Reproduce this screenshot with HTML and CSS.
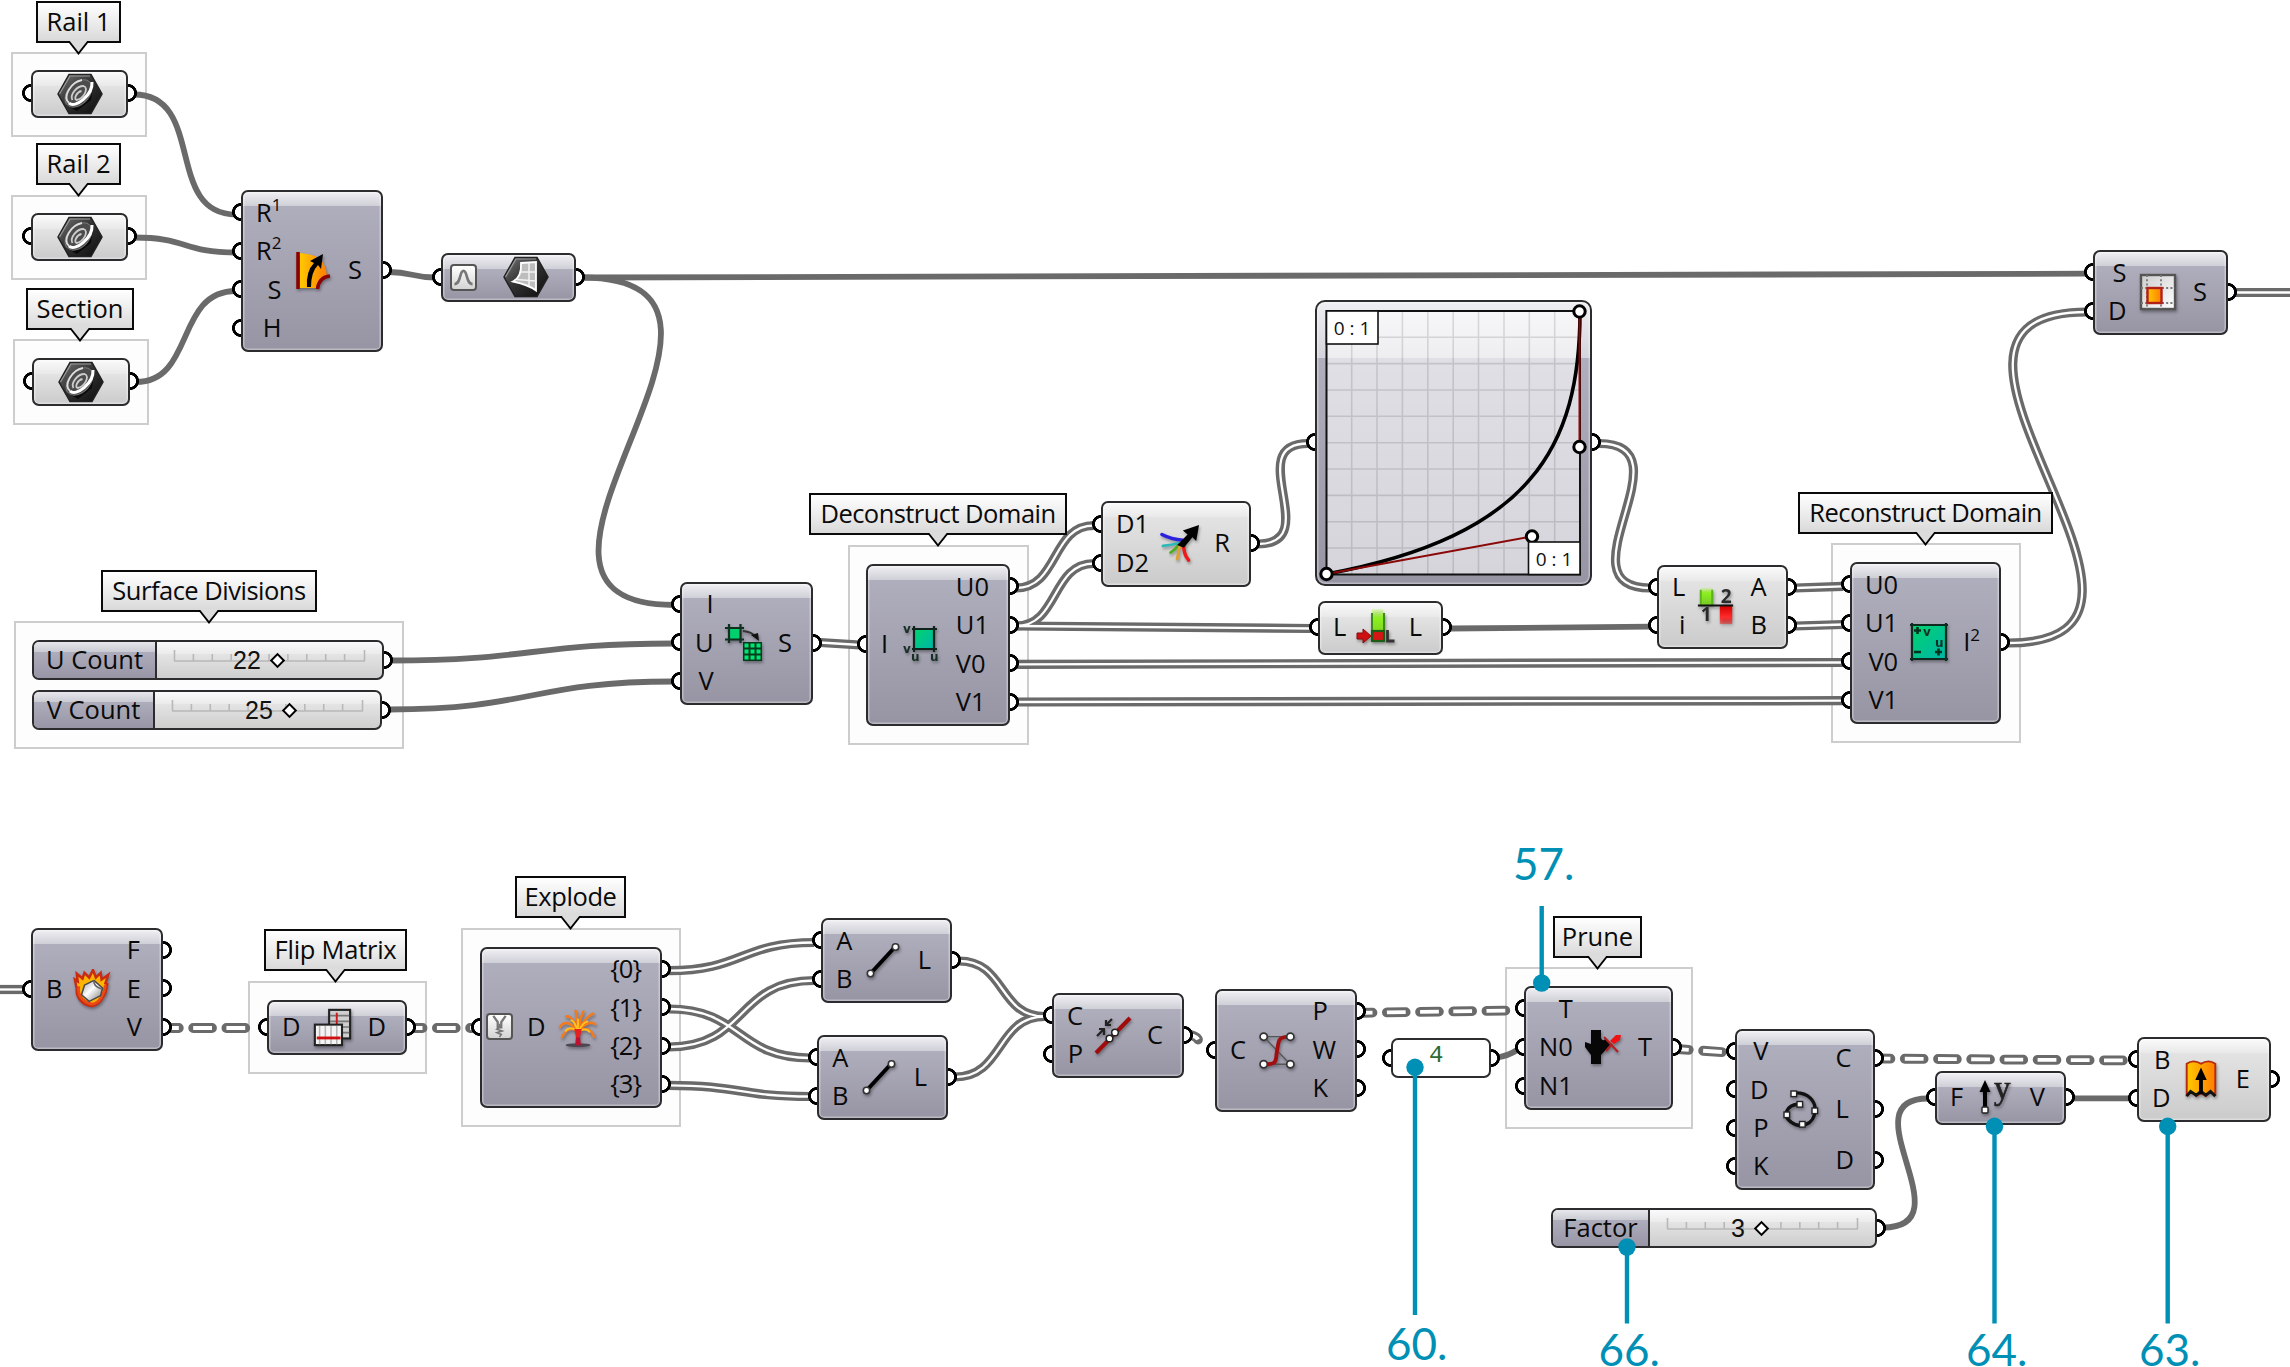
FILE: index.html
```html
<!DOCTYPE html>
<html lang="en">
<head>
<meta charset="utf-8">
<title>Node graph definition</title>
<link rel="stylesheet" href="styles.css">
</head>
<body>
<svg class="defs" aria-hidden="true">
  <defs>
    <linearGradient id="g-hex" x1="0" y1="0" x2="1" y2="1"><stop offset="0" stop-color="#777"/><stop offset=".45" stop-color="#333"/><stop offset="1" stop-color="#0c0c0c"/></linearGradient>
    <linearGradient id="g-orange" x1="0" y1="0" x2="1" y2="0"><stop offset="0" stop-color="#ffc800"/><stop offset="1" stop-color="#ff7d00"/></linearGradient>
    <linearGradient id="g-teal" x1="0" y1="0" x2="1" y2="1"><stop offset="0" stop-color="#00d46e"/><stop offset="1" stop-color="#00b5a8"/></linearGradient>
    <linearGradient id="g-lime" x1="0" y1="0" x2="0" y2="1"><stop offset="0" stop-color="#b4ff4a" stop-opacity=".25"/><stop offset=".3" stop-color="#8cf01e"/><stop offset="1" stop-color="#78c828"/></linearGradient>
    <linearGradient id="g-red" x1="0" y1="0" x2="0" y2="1"><stop offset="0" stop-color="#d40000"/><stop offset=".6" stop-color="#ff2a2a"/><stop offset="1" stop-color="#e00" stop-opacity=".4"/></linearGradient>
    <linearGradient id="g-metal" x1="0" y1="0" x2="1" y2="1"><stop offset="0" stop-color="#999"/><stop offset=".45" stop-color="#fff"/><stop offset="1" stop-color="#777"/></linearGradient>
    <linearGradient id="g-plate" x1="0" y1="0" x2="1" y2="1"><stop offset="0" stop-color="#ccc"/><stop offset="1" stop-color="#fff"/></linearGradient>

    <symbol id="i-curve" viewBox="0 0 46 42">
      <path d="M1 21 12 1.500H34L45 21 34 40.500H12Z" fill="url(#g-hex)" stroke="#222" stroke-width="1.500"/>
      <path d="M2.500 21 13 3H33" fill="none" stroke="#999" stroke-width="1.200"/>
      <path d="M9 32 36 13 34 27 20 38Z" fill="#0a0a0a"/>
      <ellipse cx="21.500" cy="20.500" rx="16" ry="10.500" transform="rotate(-46 21.500 20.500)" fill="#4c4c4c" stroke="#777" stroke-width="1"/>
      <path d="M12 30c6 6 24-8 23-21" fill="none" stroke="#fff" stroke-width="3"/>
      <path d="M12 30C5 24 14 9 25 7" fill="none" stroke="#ddd" stroke-width="1.800"/>
      <path d="M15.500 27c-3-5 4-14 11-14 6 2 0 13-7 14-3-1 0-8 5-9" fill="none" stroke="#ccc" stroke-width="1.800"/>
    </symbol>
    <symbol id="i-surface" viewBox="0 0 46 42">
      <path d="M1 21 12 1.500H34L45 21 34 40.500H12Z" fill="url(#g-hex)" stroke="#222" stroke-width="1.500"/>
      <path d="M2.500 21 13 3H33" fill="none" stroke="#999" stroke-width="1.200"/>
      <path d="M18 7 33 6V34.500Q26 29 10 25.500 19 21 18 7Z" fill="#bdbdbd" stroke="#fff" stroke-width="1.800"/>
      <path d="M26 7V30M17.500 16H33M14 23.500 33 25" stroke="#f2f2f2" stroke-width="1.500" fill="none"/>
    </symbol>
    <symbol id="i-sweep" viewBox="0 0 40 40">
      <path d="M7 3Q19 4 26 8 33 15 34 26 25 28 23 38H7Z" fill="url(#g-orange)"/>
      <path d="M5 2V39" stroke="#8b0000" stroke-width="3.500"/>
      <path d="M37 26Q26 27 24.500 39" fill="none" stroke="#8b0000" stroke-width="3.500"/>
      <path d="M14 37Q13 21 21 13L17 11 30 4 28 19 25 15Q18 22 18 37Z" fill="#000"/>
    </symbol>
    <symbol id="i-divide" viewBox="0 0 40 40">
      <rect x="5" y="5" width="12" height="12" fill="#00d06e"/>
      <path d="M1 5H20M1 16.500H20M5 1V20M16.500 1V20" stroke="#10301f" stroke-width="2.200"/>
      <path d="M19 8Q29 9 31 14" fill="none" stroke="#333" stroke-width="2"/>
      <path d="M27 12l7-2 1 8Z" fill="#111"/>
      <rect x="19" y="19" width="19" height="19" fill="#053c1c"/>
      <path d="M20.500 22.500h16M20.500 28.500h16M20.500 34.500h16" stroke="#00e676" stroke-width="3.800" stroke-dasharray="4 2"/>
    </symbol>
    <symbol id="i-deconstruct" viewBox="0 0 40 40">
      <rect x="14" y="5" width="20" height="20" fill="url(#g-teal)"/>
      <path d="M12 5H37M12 25H37M14 2V28M34 2V28" stroke="#10241c" stroke-width="2.200"/>
      <text x="3" y="9" class="glyph">v</text><text x="3" y="29" class="glyph">v</text>
      <text x="11" y="37" class="glyph">u</text><text x="30" y="37" class="glyph">u</text>
    </symbol>
    <symbol id="i-reconstruct" viewBox="0 0 40 40">
      <rect x="3" y="3" width="34" height="34" fill="url(#g-teal)"/>
      <path d="M1 3H39M1 37H39M3 1V39M37 1V39" stroke="#0f2a1e" stroke-width="2.200"/>
      <path d="M5 8.500h7M8.500 5v7M26 30h7M29.500 26.500v7M5 30h7" stroke="#04331e" stroke-width="2.600"/>
      <text x="14" y="14" class="glyph">v</text><text x="26" y="25" class="glyph">u</text>
    </symbol>
    <symbol id="i-merge" viewBox="0 0 42 42">
      <g fill="none" stroke-width="2.800" stroke-linecap="round">
        <path d="M3 31M11 31Q17 27 20 22" stroke="#4fae20"/>
        <path d="M3 24Q12 23 20 21" stroke="#2fb8b8"/>
        <path d="M18 38Q19 31 21 23" stroke="#e0a030"/>
        <path d="M2 12Q12 17 24 18" stroke="#2a20e0" stroke-width="3.600"/>
        <path d="M30 39Q24 32 25 20" stroke="#f01818" stroke-width="3.600"/>
      </g>
      <path d="M18 23 29 12 24 8 41 2 38 19 34 15 25 26Z" fill="#000"/>
    </symbol>
    <symbol id="i-length" viewBox="0 0 40 40">
      <rect x="16" y="2" width="11" height="31" fill="url(#g-lime)"/>
      <path d="M16 6v28M28 6v28" stroke="#3b8a1a" stroke-width="2"/>
      <rect x="16" y="24" width="12" height="10" fill="#d81414" stroke="#1d5c14" stroke-width="2.200"/>
      <path d="M1 26h6v-4l8 7-8 7v-4H1Z" fill="#d01010" stroke="#8c0a0a" stroke-width="1"/>
      <path d="M31.500 23V34H38.500" stroke="#333" stroke-width="2.800" fill="none"/>
    </symbol>
    <symbol id="i-item" viewBox="0 0 40 42">
      <rect x="4" y="2" width="12" height="18" fill="url(#g-lime)"/>
      <path d="M4 4v16M16 4v16" stroke="#5ab31e" stroke-width="2"/>
      <rect x="24" y="21" width="13" height="19" fill="url(#g-red)"/>
      <path d="M1 20.500H38" stroke="#111" stroke-width="2.200"/>
      <text x="25" y="17.500" class="digit">2</text><text x="4" y="37" class="digit">1</text>
    </symbol>
    <symbol id="i-isotrim" viewBox="0 0 40 40">
      <rect x="3" y="3" width="34" height="34" fill="url(#g-plate)" stroke="#555" stroke-width="2.400"/>
      <path d="M9 3V37M23 3V37M3 16H37M3 31H37" stroke="#777" stroke-width="1.800" stroke-dasharray="2 2.200"/>
      <rect x="9.500" y="16" width="14" height="15" fill="url(#g-orange)" stroke="#b3201a" stroke-width="2.400"/>
    </symbol>
    <symbol id="i-brep" viewBox="0 0 42 42">
      <path d="M20 39C10 38 3 30 4 21L2 11l3 2-1-8 6 5 2-6 5 5 4-8 3 8 5-5 1 7 7-5-3 9 2 1-2 9C31 31 28 37 20 39Z" fill="#ffb400" stroke="#c92c10" stroke-width="2.600"/>
      <path d="M6 18C4 30 14 36 20 37 28 36 33 26 34 17" fill="none" stroke="#ea4a18" stroke-width="3"/>
      <path d="M12 17 22 12 31 20 29 28 17 34 9 27Z" fill="url(#g-metal)" stroke="#4a4a4a" stroke-width="1.600" stroke-linejoin="round"/>
      <path d="M22 12Q21 18 30 21" fill="none" stroke="#666" stroke-width="1.800"/>
    </symbol>
    <symbol id="i-flip" viewBox="0 0 42 42">
      <rect x="18" y="3" width="22" height="30" fill="#cfcfcf" stroke="#222" stroke-width="2.200"/>
      <path d="M19 9h20M19 15h20M31 21h8M31 27h8" stroke="#777" stroke-width="1.800"/>
      <path d="M26 6V18" stroke="#d01818" stroke-width="2"/>
      <rect x="3" y="18.500" width="28.500" height="21.500" fill="#f4f4f4" stroke="#222" stroke-width="2.200"/>
      <path d="M8 20v19M14 20v19M20 20v19M26 20v19" stroke="#b5b5b5" stroke-width="1.600"/>
      <path d="M5 32.500H30" stroke="#d01010" stroke-width="3"/>
    </symbol>
    <symbol id="i-explode" viewBox="0 0 42 42">
      <ellipse cx="21" cy="39" rx="13" ry="2" fill="#4c4650"/>
      <path d="M18 39 19.500 24H22.500L24 39Z" fill="#c01030"/>
      <g fill="none" stroke-linecap="round">
        <path d="M21 24Q10 18 4 31M21 24Q8 10 2 20M21 24Q14 6 8 9M21 24Q20 6 18 2M21 24Q24 8 27 3M21 24Q30 8 37 6M21 24Q34 11 40 18M21 24Q34 18 38 31" stroke="#f57a1c" stroke-width="2.600" stroke-dasharray="6 1.500"/>
        <path d="M21 25Q13 18 8 24M21 25Q17 13 14 13M21 25Q27 14 32 14M21 25Q29 20 33 25M21 25 21 12" stroke="#ffc21e" stroke-width="2" stroke-dasharray="4 1.500"/>
      </g>
      <path d="M17 22h8l-2 9h-4Z" fill="#e52020"/>
    </symbol>
    <symbol id="i-line" viewBox="0 0 40 40">
      <path d="M8 33 32 7" stroke="#000" stroke-width="4"/>
      <circle cx="7.500" cy="33.500" r="3.200" fill="#fff" stroke="#333" stroke-width="1.600"/>
      <circle cx="32.500" cy="7" r="3.200" fill="#fff" stroke="#333" stroke-width="1.600"/>
    </symbol>
    <symbol id="i-cp" viewBox="0 0 40 40">
      <path d="M3 38 37 3" stroke="#a00c0c" stroke-width="4"/>
      <circle cx="16.500" cy="23.500" r="3.300" fill="#fff" stroke="#222" stroke-width="1.500"/>
      <circle cx="22" cy="17.500" r="3.300" fill="#fff" stroke="#222" stroke-width="1.500"/>
      <path d="M4 21 10 15M6 14H11V20M19 4 14 9M13 5V10H18" stroke="#222" stroke-width="2.200" fill="none"/>
    </symbol>
    <symbol id="i-cps" viewBox="0 0 40 42">
      <path d="M34 7H6L34 36H6" fill="none" stroke="#555" stroke-width="1.400"/>
      <path d="M6 36C22 36 18 32 20 22S20 7 34 7" fill="none" stroke="#a30f0f" stroke-width="4"/>
      <g fill="#fff" stroke="#333" stroke-width="1.800"><circle cx="6" cy="7" r="3.800"/><circle cx="34" cy="7" r="3.800"/><circle cx="6" cy="36" r="3.800"/><circle cx="34" cy="36" r="3.800"/></g>
    </symbol>
    <symbol id="i-prune" viewBox="0 0 40 40">
      <path d="M8 3H18V11Q20 15 22 12L28 17 18 28V37H8V28L2 20 2 15 8 17Z" fill="#070707"/>
      <path d="M21 10 35 25" stroke="#b32020" stroke-width="2.200"/>
      <path d="M23 24 29 17" stroke="#b32020" stroke-width="2.200"/>
      <path d="M27 14 33 8 38 8 37 13 31 17Z" fill="#f01212"/>
    </symbol>
    <symbol id="i-interp" viewBox="0 0 40 40">
      <path d="M14 4C28 3 36 12 35 22 34 36 20 40 11 33 2 27 6 16 19 15" fill="none" stroke="#111" stroke-width="3.400"/>
      <g fill="#fff" stroke="#222" stroke-width="1.400"><rect x="11" y="2" width="5.600" height="5.600"/><rect x="17" y="12.500" width="5.600" height="5.600"/><rect x="32" y="19" width="5.600" height="5.600"/><rect x="19.500" y="32.500" width="5.600" height="5.600"/><rect x="4" y="23" width="5.600" height="5.600"/></g>
    </symbol>
    <symbol id="i-unity" viewBox="0 0 40 40">
      <path d="M11 14V33" stroke="#000" stroke-width="4"/>
      <path d="M11 3 16.500 15H5.500Z" fill="#000"/>
      <rect x="8" y="30" width="6" height="6" rx="1" fill="#fff" stroke="#222" stroke-width="1.400"/>
      <text x="20" y="22" class="serif">y</text>
    </symbol>
    <symbol id="i-extrude" viewBox="0 0 40 42">
      <path d="M5 5Q12 0 20 5 28 0 35 5V37L30 35 25 39 20 36 15 39 10 35 5 38Z" fill="url(#g-orange)" stroke="#b52a10" stroke-width="2"/>
      <path d="M5 39 9 34 15 38 20 34 25 38 30 34 35 39" fill="none" stroke="#111" stroke-width="3"/>
      <path d="M20 37V18" stroke="#000" stroke-width="4"/><path d="M20 9 26 22H14Z" fill="#000"/>
    </symbol>
    <symbol id="i-bell" viewBox="0 0 28 28">
      <path d="M3 22C11 22 9 6 14 6S17 22 25 22" fill="none" stroke="#777" stroke-width="3.200"/>
    </symbol>
    <symbol id="i-graft" viewBox="0 0 26 26">
      <path d="M6 1 11 8V14H15V8L20 1" fill="none" stroke="#777" stroke-width="2.600"/>
      <path d="M13 10V14L10 16 16 18 10 20 15 22 13 25" fill="none" stroke="#777" stroke-width="1.800"/>
    </symbol>

    <path id="w-i" d="M820 642.500 860 645"/>
    <path id="w-u0" d="M1016 588C1059 588 1051 525.500 1094 525.500"/>
    <path id="w-u1" d="M1016 626C1059 626 1051 563.500 1094 563.500"/>
    <path id="w-u1l" d="M1016 626 1311 628.500"/>
    <path id="w-v0" d="M1016 664.300 1843 662.500"/>
    <path id="w-v1" d="M1016 702 1843 700.700"/>
    <path id="w-r" d="M1258 544C1325 544 1241 443.500 1308 443.500"/>
    <path id="w-g" d="M1599 443.500C1692 443.500 1557 588 1650 588"/>
    <path id="w-a" d="M1795 588 1843 586.300"/>
    <path id="w-b" d="M1795 626 1843 624.500"/>
    <path id="w-d" d="M2008 643C2228 643 1867 312 2087 312"/>
    <path id="w-s" d="M2235 292.500H2290"/>
    <path id="w-brep" d="M0 989.500H24"/>
    <path id="w-e0" d="M669 970.700C742 970.700 741 942.500 814 942.500"/>
    <path id="w-e1" d="M669 1009C742 1009 737 1058 810 1058"/>
    <path id="w-e2" d="M669 1047C748 1047 735 980.500 814 980.500"/>
    <path id="w-e3" d="M669 1085.300C740 1085.300 739 1096.500 810 1096.500"/>
    <path id="w-l1" d="M959 961C1006 961 998 1016.500 1045 1016.500"/>
    <path id="w-l2" d="M955 1077C1004 1077 996 1016.500 1045 1016.500"/>
    <path id="p-v" d="M160 1028H259"/>
    <path id="p-flip" d="M403.700 1028H473"/>
    <path id="p-c" d="M1180.700 1033.500Q1196 1035 1198 1039.500"/>
    <path id="p-p" d="M1353.700 1013 1511 1010.500"/>
    <path id="p-t" d="M1670 1048.500 1729 1052.500"/>
    <path id="p-b" d="M1871.600 1058.500 2130 1060.500"/>
  </defs>
</svg>

<main class="canvas">
  <div class="group g-rail1"></div>
  <div class="group g-rail2"></div>
  <div class="group g-section"></div>
  <div class="group g-counts"></div>
  <div class="group g-decon"></div>
  <div class="group g-recon"></div>
  <div class="group g-flip"></div>
  <div class="group g-explode"></div>
  <div class="group g-prune"></div>

  <svg class="layer" viewBox="0 0 2290 1367">
    <g class="wire-single">
      <path d="M134 94.500C206 94.500 164 214.500 236 214.500"/>
      <path d="M134 237.500C188 237.500 182 252.500 236 252.500"/>
      <path d="M136 382C195 382 175 291 236 291"/>
      <path d="M389 272C412 272 412 277.500 435 277.500"/>
      <path d="M582 277.500 2087 273.700"/>
      <path d="M582 277.500C808 277.500 454 605 674 605"/>
      <path d="M391 660.500C532 660.500 533 643.500 674 643.500"/>
      <path d="M389 709.500C532 709.500 531 681.500 674 681.500"/>
      <path d="M1450 628.500 1650 626.700"/>
      <path d="M1497 1057.500Q1508 1056 1518 1049.500"/>
      <path d="M1883 1227.500C1968 1227.500 1846 1098.500 1928 1098.500"/>
      <path d="M2073 1098.300H2130"/>
    </g>
    <g class="wire-list">
      <use href="#w-i"/><use href="#w-u0"/><use href="#w-u1"/><use href="#w-u1l"/><use href="#w-v0"/><use href="#w-v1"/><use href="#w-r"/><use href="#w-g"/><use href="#w-a"/><use href="#w-b"/><use href="#w-d"/><use href="#w-s"/><use href="#w-brep"/><use href="#w-e0"/><use href="#w-e1"/><use href="#w-e2"/><use href="#w-e3"/><use href="#w-l1"/><use href="#w-l2"/>
    </g>
    <g class="wire-list-core">
      <use href="#w-i"/><use href="#w-u0"/><use href="#w-u1"/><use href="#w-u1l"/><use href="#w-v0"/><use href="#w-v1"/><use href="#w-r"/><use href="#w-g"/><use href="#w-a"/><use href="#w-b"/><use href="#w-d"/><use href="#w-s"/><use href="#w-brep"/><use href="#w-e0"/><use href="#w-e1"/><use href="#w-e2"/><use href="#w-e3"/><use href="#w-l1"/><use href="#w-l2"/>
    </g>
    <g class="wire-tree">
      <use href="#p-v"/><use href="#p-flip"/><use href="#p-c"/><use href="#p-p"/><use href="#p-t"/><use href="#p-b"/>
    </g>
    <g class="wire-tree-core">
      <use href="#p-v"/><use href="#p-flip"/><use href="#p-c"/><use href="#p-p"/><use href="#p-t"/><use href="#p-b"/>
    </g>
  </svg>

  <section class="node light param n-rail1"><ul class="in"><li></li></ul><svg class="hex"><use href="#i-curve"/></svg><ul class="out"><li></li></ul></section>
  <section class="node light param n-rail2"><ul class="in"><li></li></ul><svg class="hex"><use href="#i-curve"/></svg><ul class="out"><li></li></ul></section>
  <section class="node light param n-section"><ul class="in"><li></li></ul><svg class="hex"><use href="#i-curve"/></svg><ul class="out"><li></li></ul></section>
  <section class="node n-sweep"><ul class="in"><li>R<sup>1</sup></li><li>R<sup>2</sup></li><li>S</li><li>H</li></ul><svg class="icon"><use href="#i-sweep"/></svg><ul class="out"><li>S</li></ul></section>
  <section class="node param n-surface"><ul class="in"><li></li></ul><svg class="badge"><use href="#i-bell"/></svg><svg class="hex"><use href="#i-surface"/></svg><ul class="out"><li></li></ul></section>

  <section class="slider n-ucount"><span class="name">U Count</span><div class="track"><svg class="ruler" viewBox="0 0 194 14"><path d="M1 11H193M1.500 0V11M192.500 0V11M20.500 4V11M39.500 4V11M58.500 4V11M77.500 4V11M96.500 4V11M115.500 4V11M134.500 4V11M153.500 4V11M172.500 4V11"/></svg><span class="value">22<i class="thumb"></i></span></div></section>
  <section class="slider n-vcount"><span class="name">V Count</span><div class="track"><svg class="ruler" viewBox="0 0 194 14"><path d="M1 11H193M1.500 0V11M192.500 0V11M20.500 4V11M39.500 4V11M58.500 4V11M77.500 4V11M96.500 4V11M115.500 4V11M134.500 4V11M153.500 4V11M172.500 4V11"/></svg><span class="value">25<i class="thumb"></i></span></div></section>

  <section class="node n-divide"><ul class="in"><li>I</li><li>U</li><li>V</li></ul><svg class="icon"><use href="#i-divide"/></svg><ul class="out"><li>S</li></ul></section>
  <section class="node n-decon"><ul class="in"><li>I</li></ul><svg class="icon"><use href="#i-deconstruct"/></svg><ul class="out"><li>U0</li><li>U1</li><li>V0</li><li>V1</li></ul></section>
  <section class="node light n-merge"><ul class="in"><li>D1</li><li>D2</li></ul><svg class="icon"><use href="#i-merge"/></svg><ul class="out"><li>R</li></ul></section>

  <section class="node param n-graph"><ul class="in"><li></li></ul>
    <svg class="plot" viewBox="0 0 277 286">
      <rect class="plot-bg" x="11.300" y="11" width="254" height="264"/>
      <path class="plot-grid" d="M36.700 11V275M62 11V275M87.400 11V275M112.800 11V275M138.200 11V275M163.500 11V275M189 11V275M214.300 11V275M239.700 11V275M11 37.300H265M11 63.600H265M11 90H265M11 116.300H265M11 142.700H265M11 169H265M11 195.400H265M11 221.800H265M11 248H265"/>
      <rect class="plot-frame" x="11.500" y="11" width="253.500" height="263.500"/>
      <path class="plot-curve" d="M11.500 274C217 236 265 146 265 11.500"/>
      <path class="plot-handle" d="M11.500 274 217 236.500M264.500 11.500V147"/>
      <g class="plot-knob"><circle cx="11.500" cy="274" r="5.700"/><circle cx="264.500" cy="11.500" r="5.700"/><circle cx="264.500" cy="147" r="5.700"/><circle cx="217" cy="236.500" r="5.700"/></g>
      <rect class="plot-tag" x="11.500" y="11" width="51.500" height="33"/>
      <rect class="plot-tag" x="213.500" y="242" width="51.500" height="32.500"/>
      <text class="plot-text" x="37" y="34.500">0 : 1</text>
      <text class="plot-text" x="239" y="265.500">0 : 1</text>
    </svg>
  <ul class="out"><li></li></ul></section>

  <section class="node light n-length"><ul class="in"><li>L</li></ul><svg class="icon"><use href="#i-length"/></svg><ul class="out"><li>L</li></ul></section>
  <section class="node light n-item"><ul class="in"><li>L</li><li>i</li></ul><svg class="icon"><use href="#i-item"/></svg><ul class="out"><li>A</li><li>B</li></ul></section>
  <section class="node n-recon"><ul class="in"><li>U0</li><li>U1</li><li>V0</li><li>V1</li></ul><svg class="icon"><use href="#i-reconstruct"/></svg><ul class="out"><li>I<sup>2</sup></li></ul></section>
  <section class="node n-isotrim"><ul class="in"><li>S</li><li>D</li></ul><svg class="icon"><use href="#i-isotrim"/></svg><ul class="out"><li>S</li></ul></section>

  <section class="node n-brep"><ul class="in"><li>B</li></ul><svg class="icon"><use href="#i-brep"/></svg><ul class="out"><li>F</li><li>E</li><li>V</li></ul></section>
  <section class="node n-flip"><ul class="in"><li>D</li></ul><svg class="icon"><use href="#i-flip"/></svg><ul class="out"><li>D</li></ul></section>
  <section class="node n-explode"><ul class="in"><li><svg class="badge"><use href="#i-graft"/></svg>D</li></ul><svg class="icon"><use href="#i-explode"/></svg><ul class="out"><li>{0}</li><li>{1}</li><li>{2}</li><li>{3}</li></ul></section>
  <section class="node n-line1"><ul class="in"><li>A</li><li>B</li></ul><svg class="icon"><use href="#i-line"/></svg><ul class="out"><li>L</li></ul></section>
  <section class="node n-line2"><ul class="in"><li>A</li><li>B</li></ul><svg class="icon"><use href="#i-line"/></svg><ul class="out"><li>L</li></ul></section>
  <section class="node n-cp"><ul class="in"><li>C</li><li>P</li></ul><svg class="icon"><use href="#i-cp"/></svg><ul class="out"><li>C</li></ul></section>
  <section class="node n-cps"><ul class="in"><li>C</li></ul><svg class="icon"><use href="#i-cps"/></svg><ul class="out"><li>P</li><li>W</li><li>K</li></ul></section>
  <section class="node panel n-panel"><ul class="in"><li></li></ul><span class="text">4</span><ul class="out"><li></li></ul></section>
  <section class="node n-prune"><ul class="in"><li>T</li><li>N0</li><li>N1</li></ul><svg class="icon"><use href="#i-prune"/></svg><ul class="out"><li>T</li></ul></section>
  <section class="node n-interp"><ul class="in"><li>V</li><li>D</li><li>P</li><li>K</li></ul><svg class="icon"><use href="#i-interp"/></svg><ul class="out"><li>C</li><li>L</li><li>D</li></ul></section>
  <section class="node n-unity"><ul class="in"><li>F</li></ul><svg class="icon"><use href="#i-unity"/></svg><ul class="out"><li>V</li></ul></section>
  <section class="node light n-extrude"><ul class="in"><li>B</li><li>D</li></ul><svg class="icon"><use href="#i-extrude"/></svg><ul class="out"><li>E</li></ul></section>
  <section class="slider n-factor"><span class="name">Factor</span><div class="track"><svg class="ruler" viewBox="0 0 194 14"><path d="M1 11H193M1.500 0V11M192.500 0V11M20.500 4V11M39.500 4V11M58.500 4V11M77.500 4V11M96.500 4V11M115.500 4V11M134.500 4V11M153.500 4V11M172.500 4V11"/></svg><span class="value">3<i class="thumb"></i></span></div></section>

  <div class="label l-rail1">Rail 1</div>
  <div class="label l-rail2">Rail 2</div>
  <div class="label l-section">Section</div>
  <div class="label l-counts">Surface Divisions</div>
  <div class="label l-decon">Deconstruct Domain</div>
  <div class="label l-recon">Reconstruct Domain</div>
  <div class="label l-flip">Flip Matrix</div>
  <div class="label l-explode">Explode</div>
  <div class="label l-prune">Prune</div>

  <svg class="layer callouts" viewBox="0 0 2290 1367">
    <path d="M1541.700 906V983M1415 1067V1315M1627 1247V1323.500M1994.500 1126V1323.500M2167.700 1126V1323.500"/>
    <circle cx="1541.700" cy="983" r="8.700"/><circle cx="1415" cy="1067.300" r="8.700"/><circle cx="1627" cy="1247" r="8.700"/><circle cx="1994.500" cy="1126.300" r="8.700"/><circle cx="2167.700" cy="1126.300" r="8.700"/>
    <text x="1513" y="879.500">57.</text>
    <text x="1386" y="1360">60.</text>
    <text x="1598.500" y="1366">66.</text>
    <text x="1966" y="1366">64.</text>
    <text x="2139" y="1366">63.</text>
  </svg>
</main>
</body>
</html>
```
FILE: styles.css
```css
* { box-sizing: border-box; }
body { margin: 0; background: #fff; overflow: hidden; }
.defs { position: absolute; width: 0; height: 0; }
.canvas {
  position: relative;
  width: 2290px;
  height: 1367px;
  overflow: hidden;
  font-family: "Open Sans", "Noto Sans", sans-serif;
  font-size: 25.500px;
  line-height: 1;
  color: #0a0a0a;
}
.layer { position: absolute; inset: 0; width: 2290px; height: 1367px; }

/* wires */
.wire-single { fill: none; stroke: #6a6a6a; stroke-width: 5.800; }
.wire-list { fill: none; stroke: #6a6a6a; stroke-width: 9.200; }
.wire-list-core { fill: none; stroke: #fff; stroke-width: 2.300; }
.wire-tree { fill: none; stroke: #6a6a6a; stroke-width: 9.800; stroke-linecap: round; stroke-dasharray: 18.800 14.400; }
.wire-tree-core { fill: none; stroke: #fff; stroke-width: 3.800; stroke-dasharray: 18.800 14.400; }

/* groups */
.group { position: absolute; border: 2px solid #cdcdcd; background: #fdfdfd; }
.g-rail1 { left: 11px; top: 52px; width: 136px; height: 85px; }
.g-rail2 { left: 11px; top: 195px; width: 136px; height: 85px; }
.g-section { left: 13px; top: 339px; width: 136px; height: 86px; }
.g-counts { left: 14px; top: 621px; width: 390px; height: 128px; }
.g-decon { left: 848px; top: 545px; width: 181px; height: 200px; }
.g-recon { left: 1831px; top: 543px; width: 190px; height: 200px; }
.g-flip { left: 248px; top: 981px; width: 179px; height: 93px; }
.g-explode { left: 461px; top: 928px; width: 220px; height: 199px; }
.g-prune { left: 1505px; top: 967px; width: 188px; height: 162px; }

/* components */
.node, .slider {
  position: absolute;
  display: flex;
  border: 2px solid #2c2c2e;
  border-radius: 7px;
}
.node {
  align-items: center;
  justify-content: space-between;
  background: linear-gradient(#efeff3 0, #cfcfd7 14px, #afaebd 14px, #9795a4 100%);
  box-shadow: inset 0 0 0 1.500px rgba(255, 255, 255, .35);
}
.node.light { background: linear-gradient(#fafafa 0, #e9e9e9 14px, #e3e3e3 14px, #cbcbcb 100%); }
.node ul {
  display: flex;
  flex-direction: column;
  align-self: stretch;
  margin: 0;
  padding: 1px 0 3px;
  list-style: none;
}
.node .in { padding-left: 13px; text-align: right; }
.node .out { padding-right: 19px; }
.node li {
  position: relative;
  flex: 1;
  display: flex;
  align-items: center;
}
.in li { justify-content: flex-end; }
.node.param .in, .node.param .out { padding-left: 0; padding-right: 0; }

/* half-round grips on the component edges */
.in li::before, .out li::after, .slider::after {
  content: "";
  position: absolute;
  top: 50%;
  width: 10px;
  height: 20px;
  margin-top: -10px;
  background: radial-gradient(circle at 0 50%, #fff 5.700px, #000 6.300px, #000 8.700px, transparent 9.300px);
}
.in li::before { left: -25px; background: radial-gradient(circle at 100% 50%, #fff 5.700px, #000 6.300px, #000 8.700px, transparent 9.300px); }
.param .in li::before { left: -12px; }
.out li::after { right: -31px; }
.param .out li::after { right: -12px; }
.slider::after { right: -12px; }
sup { font-size: 17px; line-height: 1; position: relative; top: -8px; vertical-align: baseline; }
.icon { flex: none; width: 40px; height: 40px; margin: -2px 3px 0 -1px; filter: drop-shadow(1px 2px 1.500px rgba(0, 0, 0, .35)); }
.hex { flex: none; width: 46px; height: 42px; margin-top: -1px; }
.badge { flex: none; width: 27px; height: 27px; border: 2px solid #555; border-radius: 4px; background: linear-gradient(#fff, #d4d4d4); }
.glyph { font: bold 12px "DejaVu Sans", sans-serif; fill: #173026; }
.digit { font: bold 20px "Open Sans", sans-serif; fill: #2b2b2b; }
.serif { font: 33px "Liberation Serif", serif; fill: #222; stroke: #222; stroke-width: .6; }

.n-rail1 { left: 31px; top: 70px; width: 97px; height: 48px; }
.n-rail2 { left: 31px; top: 213px; width: 97px; height: 48px; }
.n-section { left: 32px; top: 358px; width: 98px; height: 48px; }
.n-sweep { left: 241px; top: 190px; width: 142px; height: 162px; }
.n-surface { left: 441px; top: 253px; width: 135px; height: 49px; }
.n-surface .badge { margin-left: 7px; margin-top: -1px; }
.n-surface .hex { margin: -1px 25px 0 auto; }
.n-divide { left: 680px; top: 582px; width: 133px; height: 123px; }
.n-decon { left: 866px; top: 564px; width: 144px; height: 162px; }
.n-merge { left: 1101px; top: 501px; width: 150px; height: 86px; }
.n-length { left: 1318px; top: 601px; width: 125px; height: 54px; }
.n-item { left: 1657px; top: 565px; width: 131px; height: 84px; }
.n-recon { left: 1850px; top: 562px; width: 151px; height: 162px; }
.n-isotrim { left: 2093px; top: 250px; width: 135px; height: 85px; }
.n-brep { left: 31px; top: 928px; width: 132px; height: 123px; }
.n-flip { left: 267px; top: 1000px; width: 140px; height: 55px; }
.n-explode { left: 480px; top: 947px; width: 182px; height: 161px; }
.n-explode .in { padding-left: 4px; }
.n-explode .in li::before { left: -16px; }
.n-explode .out { letter-spacing: -1px; }
.n-explode .icon { margin: 0; }
.n-explode .badge { margin-right: 14px; }
.n-line1 { left: 821px; top: 918px; width: 131px; height: 85px; }
.n-line2 { left: 817px; top: 1035px; width: 131px; height: 85px; }
.n-cp { left: 1052px; top: 993px; width: 132px; height: 85px; }
.n-cps { left: 1215px; top: 989px; width: 142px; height: 123px; }
.n-prune { left: 1524px; top: 986px; width: 149px; height: 124px; }
.n-interp { left: 1735px; top: 1029px; width: 140px; height: 161px; }
.n-unity { left: 1935px; top: 1071px; width: 131px; height: 54px; }
.n-extrude { left: 2137px; top: 1037px; width: 134px; height: 85px; }
.node.panel { left: 1391px; top: 1038px; width: 100px; height: 40px; background: #fff; box-shadow: none; }
.panel .in, .panel .out { padding: 2px 0; }
.panel .in li::before { left: -12px; }
.panel .out li::after { right: -12px; }
.panel .text { width: 24px; margin-top: -6px; font: 24px "Liberation Mono", monospace; color: #2c6b34; }

/* sliders */
.slider { background: linear-gradient(#fafafa 0, #ebebeb 12px, #e4e4e4 12px, #cecece 100%); height: 40px; }
.slider .name {
  display: flex;
  align-items: center;
  justify-content: center;
  border-right: 2px solid #2c2c2e;
  border-radius: 5px 0 0 5px;
  background: linear-gradient(#e6e6ec 0, #cacad3 10px, #aeadbc 10px, #9896a6 100%);
}
.track { flex: 1; display: grid; align-items: center; }
.track > * { grid-area: 1 / 1; }
.ruler { width: 193px; height: 14px; margin: -6px 0 0 16px; fill: none; stroke: #b8b8b8; stroke-width: 1.600; }
.value { display: flex; align-items: center; gap: 11px; font: 25px "Liberation Sans", Arial, sans-serif; color: #111; }
.thumb { width: 11px; height: 11px; border: 2.500px solid #000; background: #fff; transform: rotate(45deg); }
.n-ucount { left: 32px; top: 640px; width: 352px; }
.n-ucount .name { width: 123px; }
.n-ucount .value { margin-left: 76px; }
.n-vcount { left: 32px; top: 690px; width: 350px; }
.n-vcount .name { width: 121px; }
.n-vcount .value { margin-left: 90px; }
.n-factor { left: 1551px; top: 1208px; width: 326px; }
.n-factor .name { width: 97px; }
.n-factor .value { margin-left: 81px; }

/* graph mapper */
.node.n-graph { left: 1315px; top: 300px; width: 277px; height: 286px; border-radius: 10px; background: linear-gradient(#efeff2 0, #d4d4dc 56px, #b0afbe 56px, #9795a4 100%); }
.plot { flex: none; width: 277px; height: 286px; margin: -2px; overflow: visible; }
.plot-bg { fill: #fff; fill-opacity: .6; }
.plot-grid { fill: none; stroke: #000; stroke-opacity: .12; stroke-width: 1.600; }
.plot-frame { fill: none; stroke: #111; stroke-width: 2; }
.plot-curve { fill: none; stroke: #000; stroke-width: 3.600; }
.plot-handle { fill: none; stroke: #8a0808; stroke-width: 2; }
.plot-knob { fill: #fff; stroke: #000; stroke-width: 3; }
.plot-tag { fill: #fff; stroke: #111; stroke-width: 1.600; }
.plot-text { font: 19px "Open Sans", sans-serif; text-anchor: middle; fill: #111; }
.n-graph ul { padding: 0 0 2px; }

/* balloons */
.label {
  position: absolute;
  height: 42px;
  padding-top: 6px;
  border: 2px solid #0a0a0a;
  background: linear-gradient(#fff, #e9e9e9 60%, #d9d9d9);
  text-align: center;
  white-space: nowrap;
}
.label::before, .label::after {
  content: "";
  position: absolute;
  left: 50%;
  clip-path: polygon(0 0, 100% 0, 50% 100%);
}
.label::before { top: 100%; width: 22px; height: 14px; margin-left: -11px; background: #000; }
.label::after { top: calc(100% - 1px); width: 19px; height: 12px; margin-left: -9.500px; background: #dcdcdc; }
.l-rail1 { left: 36px; top: 1px; width: 85px; }
.l-rail2 { left: 36px; top: 143px; width: 85px; }
.l-section { left: 26px; top: 288px; width: 108px; }
.l-counts { left: 101px; top: 570px; width: 216px; letter-spacing: -.5px; }
.l-decon { left: 809px; top: 493px; width: 258px; letter-spacing: -.55px; }
.l-recon { left: 1798px; top: 492px; width: 255px; letter-spacing: -.55px; }
.l-flip { left: 264px; top: 929px; width: 143px; letter-spacing: -.25px; }
.l-explode { left: 515px; top: 876px; width: 111px; letter-spacing: -.4px; }
.l-prune { left: 1553px; top: 916px; width: 89px; }

/* numbered callouts */
.callouts { fill: #0090b5; font: 44px Lato, sans-serif; }
.callouts path { fill: none; stroke: #0090b5; stroke-width: 4.400; }
```
